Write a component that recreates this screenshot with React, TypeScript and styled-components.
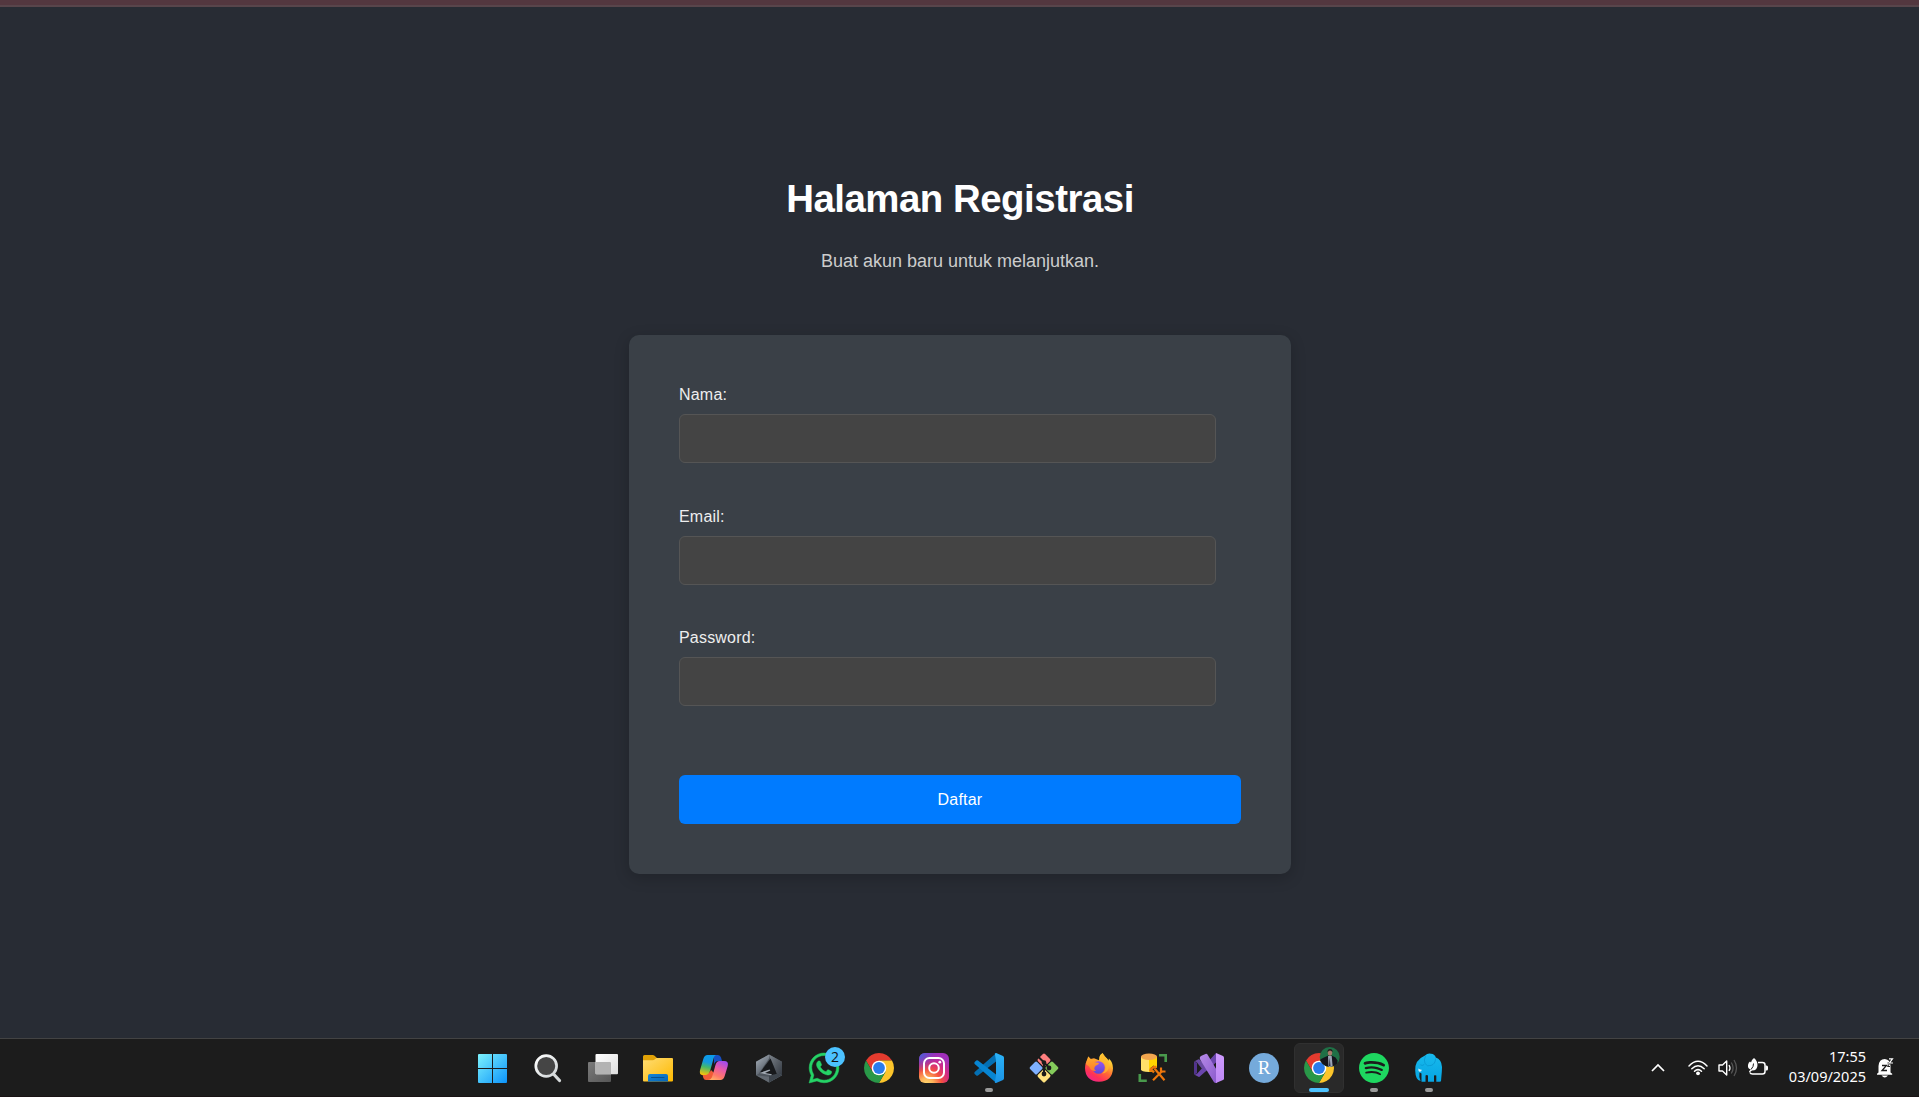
import React from 'react';
import styled, { createGlobalStyle } from 'styled-components';
import { SiWhatsapp, SiSpotify } from 'react-icons/si';

const GlobalStyle = createGlobalStyle`
  * { box-sizing: border-box; }
  body { margin: 0; background: #282c34; overflow: hidden; font-family: 'Liberation Sans', Arial, sans-serif; }
`;

const Screen = styled.div`
  display: flex;
  flex-direction: column;
  width: 1919px;
  height: 1097px;
`;

const BrowserEdge = styled.div`
  height: 7px;
  background: #53373f;
  border-bottom: 2px solid #58454b;
`;

const Page = styled.main`
  flex: 1;
  display: flex;
  flex-direction: column;
  align-items: center;
  padding: 170px 0 0 1px;
  background: #282c34;
`;

const Title = styled.h1`
  margin: 0 0 30px;
  font-size: 38.4px;
  line-height: 44px;
  letter-spacing: -0.48px;
  color: #fff;
`;

const Subtitle = styled.p`
  margin: 0 0 64px;
  font-size: 18px;
  line-height: 20px;
  color: #ccc;
`;

const Card = styled.form`
  display: flex;
  flex-direction: column;
  width: 662px;
  height: 539px;
  padding: 50px;
  border-radius: 10px;
  background: #3a4047;
  box-shadow: 0 4px 15px rgba(0, 0, 0, 0.2);
`;

const Field = styled.div`
  display: flex;
  flex-direction: column;
  height: 121.5px;
`;

const Label = styled.label`
  margin-bottom: 10px;
  font-size: 16px;
  line-height: 19px;
  letter-spacing: 0.2px;
  color: #eee;
`;

const Input = styled.input`
  width: 537px;
  height: 49px;
  padding: 12px;
  border: 1px solid #555;
  border-radius: 6px;
  background: #444;
  color: #fff;
  font-size: 16px;
  outline: none;
`;

const SubmitButton = styled.button`
  height: 49px;
  margin-top: 25.5px;
  border: none;
  border-radius: 6px;
  background: #007bff;
  color: #fff;
  font: 16px 'Liberation Sans', Arial, sans-serif;
  letter-spacing: 0.2px;
`;

const Taskbar = styled.footer`
  display: flex;
  align-items: center;
  justify-content: space-between;
  height: 59px;
  padding: 0 25px 0 479px;
  border-top: 1px solid #434343;
  border-bottom: 1px solid #191214;
  background: #1c1c1c;
`;

const Apps = styled.nav`
  display: flex;
  gap: 25px;
`;

const TaskButton = styled.div<{ $state?: 'active' | 'running' }>`
  position: relative;
  width: 30px;
  height: 30px;

  &::before {
    content: '';
    display: ${(p) => (p.$state === 'active' ? 'block' : 'none')};
    position: absolute;
    inset: -10px;
    border: 1px solid #303030;
    border-radius: 6px;
    background: #292929;
  }

  &::after {
    content: '';
    display: ${(p) => (p.$state ? 'block' : 'none')};
    position: absolute;
    top: 35px;
    left: ${(p) => (p.$state === 'active' ? '5px' : '11px')};
    width: ${(p) => (p.$state === 'active' ? '20px' : '8px')};
    height: 4px;
    border-radius: 2px;
    background: ${(p) => (p.$state === 'active' ? '#4cc2ff' : '#9a9a9a')};
  }

  > svg {
    position: relative;
    display: block;
    overflow: visible;
  }
`;

const Badge = styled.span`
  position: absolute;
  top: -6px;
  left: 16px;
  width: 20px;
  height: 20px;
  border-radius: 50%;
  background: #4cc2ff;
  color: #111;
  font: 14px/20px 'Open Sans', sans-serif;
  text-align: center;
`;

const Tray = styled.div`
  display: flex;
  align-items: center;
`;

const TrayIcon = styled.svg<{ $gap: number }>`
  display: block;
  margin-right: ${(p) => p.$gap}px;
  overflow: visible;
`;

const Clock = styled.div`
  width: 90px;
  margin: 0 10px 3px 0;
  color: #fff;
  font: 14.5px/20px 'Noto Sans', sans-serif;
  text-align: right;
  white-space: nowrap;
`;

const Glyph = ({ children }: { children: React.ReactNode }) => (
  <svg width="30" height="30" viewBox="0 0 30 30">{children}</svg>
);

type Stop = [string, string];
const Grad = ({ id, dir = [0, 0, 1, 1], stops }: { id: string; dir?: number[]; stops: Stop[] }) => (
  <linearGradient id={id} x1={dir[0]} y1={dir[1]} x2={dir[2]} y2={dir[3]}>
    {stops.map(([o, c]) => <stop key={o} offset={o} stopColor={c} />)}
  </linearGradient>
);

const Windows = () => (
  <Glyph>
    <defs>
      <linearGradient id="win" gradientUnits="userSpaceOnUse" x1="-1" y1="1" x2="28" y2="30">
        <stop offset="0" stopColor="#7df3fd" /><stop offset="1" stopColor="#0c93fa" />
      </linearGradient>
    </defs>
    <path fill="url(#win)" d="M0 1h13v14H-1V2q0-1 1-1zM14 1h13q1 0 1 1v13H14zM-1 16h14v14H0q-1 0-1-1zM14 16h14v13q0 1-1 1H14z" />
  </Glyph>
);

const Search = () => (
  <Glyph>
    <defs><Grad id="sea" stops={[['0', '#fff'], ['1', '#cfd4d6']]} /></defs>
    <path d="M19.500 21l6 6.500" stroke="#d6dadb" strokeWidth="3.200" strokeLinecap="round" />
    <circle cx="12.200" cy="13" r="10.400" fill="#454545" stroke="url(#sea)" strokeWidth="2.700" />
  </Glyph>
);

const TaskView = () => (
  <Glyph>
    <defs>
      <Grad id="tva" stops={[['0', '#fff'], ['1', '#dedede']]} />
      <Grad id="tvb" stops={[['0', '#7b7b7b'], ['1', '#565656']]} />
    </defs>
    <rect x="-1" y="9" width="23" height="20" rx="1" fill="url(#tvb)" />
    <rect x="6.500" y="1" width="22.500" height="20.300" rx="1" fill="url(#tva)" />
    <path d="M6.500 9H21q1 0 1 1v11.300H7.500q-1 0-1-1z" fill="#b3b3b3" />
  </Glyph>
);

const Explorer = () => (
  <Glyph>
    <defs>
      <Grad id="exa" stops={[['0', '#ffdc74'], ['1', '#fdb900']]} />
      <Grad id="exb" stops={[['0', '#1585d8'], ['1', '#0565b6']]} />
    </defs>
    <path d="M-1 9V3.500Q-1 2 .5 2h8.300q1 0 1.800.8L13 5v4z" fill="#e0a106" />
    <path d="M-1 7.200h9.500q1.500 0 2.700-1.300L12.500 5H28q1 0 1 1v21.500q0 1-1 1H0q-1 0-1-1z" fill="url(#exa)" />
    <path d="M4 28.500V23q0-2 2-2h16q2 0 2 2v5.500z" fill="url(#exb)" />
    <path d="M7.500 24.500h12.500" stroke="#08508d" strokeWidth="1.200" strokeLinecap="round" />
  </Glyph>
);

const Copilot = () => (
  <Glyph>
    <defs>
      <Grad id="coa" dir={[0.5, 0, 0.3, 1]} stops={[['0', '#0b9bea'], ['.35', '#1598e0'], ['.6', '#43b86b'], ['1', '#f6c10c']]} />
      <Grad id="cob" dir={[0.8, 0, 0.3, 1]} stops={[['0', '#a04bf0'], ['.4', '#e85aa8'], ['.75', '#ff7868'], ['1', '#ffad67']]} />
    </defs>
    <path d="M15 2h4q2.200 0 3 2.500L23 8h-4q-3 0-4 3.500z" fill="#174fc4" />
    <path d="M7 27q-2 0-2.600-2L3 20h6q2 0 3-3l4 4-2 6z" fill="#f15b37" />
    <path d="M8.500 2H17q-1.700.6-2.300 3l-3.400 12.300Q10 22 6 22H3.500Q0 22 1 17.300L4.300 6Q5.500 2 8.500 2z" fill="url(#coa)" />
    <path d="M20.500 8H25q5 0 3.700 5l-3 10Q24.600 27 21.300 27H8.500q3.800 0 4.900-4l3.100-11Q17.700 8 20.500 8z" fill="url(#cob)" />
  </Glyph>
);

const Cube = () => (
  <Glyph>
    <defs>
      <Grad id="cua" dir={[0, 0, 0.6, 1]} stops={[['0', '#aeb7c1'], ['1', '#4d555f']]} />
      <Grad id="cub" stops={[['0', '#7c838a'], ['1', '#343a43']]} />
    </defs>
    <path d="M15 1.500l13 7.200v13.600L15 29.500 2 22.300V8.700z" fill="#4e555d" />
    <path d="M15 1.500v4L4.500 21 2 22.300V8.700z" fill="url(#cua)" />
    <path d="M15 1.500l13 7.200v13.600l-5-2L15.800 5z" fill="url(#cub)" />
    <path d="M2 22.300L15 29.500l13-7.200-5-2-8 3.500z" fill="#636a72" />
    <path d="M15 29.500V23l8-3 5 2.300z" fill="#3d444c" />
    <path d="M16.500 5.500l6.300 15.200L18 22 6 19.500z" fill="#17191c" />
    <path d="M5.500 20l10-3.600.8 1.200-5.300 2.400 7 1.200-1 1z" fill="#a2aab3" />
  </Glyph>
);

const Chrome = ({ avatar = false }: { avatar?: boolean }) => (
  <Glyph>
    <path d="M2.010 7.500A15 15 0 0 1 27.990 7.500H15V15l-6.500 3.750z" fill="#e33b2e" />
    <path d="M27.990 7.500A15 15 0 0 1 15 30l6.500-11.250L15 15V7.500z" fill="#fcc52b" />
    <path d="M15 30A15 15 0 0 1 2.010 7.500L8.500 18.750 15 15l6.500 3.750z" fill="#299848" />
    <circle cx="15" cy="15" r="7.300" fill="#fff" />
    <circle cx="15" cy="15" r="5.900" fill="#2a7cec" />
    {avatar && (
      <g>
        <clipPath id="ava"><circle cx="25.700" cy="4" r="10" /></clipPath>
        <g clipPath="url(#ava)">
          <path d="M15-7h22v22H15z" fill="#1f7046" />
          <path d="M15 8l2-2 3-1.500 4.500-2h3l4 2 2 3V15H15z" fill="#15141c" />
          <path d="M15.500 8q3 1.500 4 6l-4 1z" fill="#48343b" />
          <path d="M24 3h3.700l1 11h-4.200z" fill="#9aa4b4" />
          <path d="M25.700 4.500l.8 8.500h-1.500z" fill="#262b42" />
          <ellipse cx="26" cy="-.2" rx="2.200" ry="3" fill="#a77b69" />
          <path d="M23.500-.5q-.3-3.600 2.500-3.600t2.500 3.300q-1.300-1.700-2.500-1.600t-2.500 1.900z" fill="#221d1d" />
        </g>
      </g>
    )}
  </Glyph>
);

const Instagram = () => (
  <Glyph>
    <defs>
      <radialGradient id="ina" cx=".25" cy="1.050" r="1.050">
        <stop offset="0" stopColor="#ffdc70" /><stop offset=".22" stopColor="#fdb35a" />
        <stop offset=".48" stopColor="#f4513f" /><stop offset=".72" stopColor="#d42a82" /><stop offset="1" stopColor="#a02fbb" />
      </radialGradient>
      <radialGradient id="inb" cx="0" cy="0" r=".65">
        <stop offset="0" stopColor="#3a6ce0" /><stop offset="1" stopColor="#6b3bd0" stopOpacity="0" />
      </radialGradient>
    </defs>
    <rect width="30" height="30" rx="6" fill="url(#ina)" />
    <rect width="30" height="30" rx="6" fill="url(#inb)" />
    <g fill="none" stroke="#fff" strokeWidth="2">
      <rect x="5" y="5" width="20" height="20" rx="5.500" />
      <circle cx="15" cy="15" r="4.800" />
    </g>
    <circle cx="20.800" cy="9.200" r="1.400" fill="#fff" />
  </Glyph>
);

const VsCode = () => (
  <Glyph>
    <defs><Grad id="vsc" dir={[0, 0, 0, 1]} stops={[['0', '#2bb3f8'], ['1', '#1b94e6']]} /></defs>
    <path d="M22 .2L.7 19q-.9.900 0 1.900l1.600 1.500q.8.700 1.700 0L22 8.500z" fill="#0470b4" />
    <path d="M22 29.800L.7 11q-.9-.900 0-1.900l1.600-1.500q.8-.700 1.700 0L22 21.500z" fill="#0785d2" />
    <path d="M22 7.500L20.800.6q1.200-.9 2.500-.2L29 3.100q1 .500 1 1.600v20.600q0 1.100-1 1.600l-5.700 2.700q-1.300.700-2.500-.200L22 22.500z" fill="url(#vsc)" />
  </Glyph>
);

const Git = () => (
  <Glyph>
    <g transform="rotate(45 15 15)">
      <rect x="4.400" y="4.400" width="10" height="10" rx="1.500" fill="#ff7f7f" />
      <rect x="15.600" y="4.400" width="10" height="10" rx="1.500" fill="#84cb5b" />
      <rect x="4.400" y="15.600" width="10" height="10" rx="1.500" fill="#7fb0ff" />
      <rect x="15.600" y="15.600" width="10" height="10" rx="1.500" fill="#ffe27f" />
    </g>
    <path d="M9.500 4L15 9.500V21M15 9.500l5.500 5.500" fill="none" stroke="#1b1b1b" strokeWidth="2" />
    <circle cx="15" cy="9.500" r="2.300" fill="#1b1b1b" />
    <circle cx="15" cy="21" r="2.400" fill="#1b1b1b" />
    <circle cx="20" cy="15" r="2.400" fill="#1b1b1b" />
  </Glyph>
);

const Firefox = () => (
  <Glyph>
    <defs>
      <Grad id="ffa" dir={[0.85, 0, 0.25, 1]} stops={[['0', '#fff04a'], ['.3', '#ffbd2f'], ['.55', '#ff6a35'], ['.8', '#ff3157'], ['1', '#ef248d']]} />
      <Grad id="ffb" dir={[0.5, 0, 0.5, 1]} stops={[['0', '#9a55ee'], ['1', '#5a48d6']]} />
      <Grad id="ffc" dir={[0, 0, 0, 1]} stops={[['0', '#ffb02c'], ['1', '#ff7a2a']]} />
    </defs>
    <path d="M18.500 0q1.300 3 4.300 5.200 1.200 1 1.800 2.500l.3-2.200Q29 9.500 29 15.200 28.500 28.500 15 28.700 1.300 28.200 1 15 1 9.500 4 6l.2-2.500L6.500 6l3.500-.7 5 2 .300-3.300q.7-2.500 3.200-4z" fill="url(#ffa)" />
    <circle cx="14.500" cy="14.500" r="6.300" fill="url(#ffb)" />
    <path d="M1.800 11Q2.500 7.500 4.200 3.500L7 6.300q3-1 5.300.700-1.600.8-1.800 2.200l3.500.5q1.800.5 0 1.900-3 1-3.300 2.500Q9.500 16.500 12 18q-5 .5-6.700-4.300z" fill="url(#ffc)" />
    <path d="M14.500 7.500Q22 8 21.500 15q-.5 4-3.500 5.600 6.500-.600 7-7.600-.500-6-6.500-13-3 4-1 7.500z" fill="#ffb82e" opacity=".75" />
  </Glyph>
);

const SqlTools = () => (
  <Glyph>
    <path d="M20 2.300h6.700V9M.8 21v6.700h7" fill="none" stroke="#49994c" strokeWidth="2.600" />
    <path d="M2 3.500v12.800q0 2.700 8 2.700V3.500z" fill="#ffe169" />
    <path d="M10 3.500h8v12.800q0 2.700-8 2.700z" fill="#ffd500" />
    <ellipse cx="10" cy="3.700" rx="8" ry="3.200" fill="#f2a64e" />
    <g stroke="#1c1c1c" strokeWidth="4" fill="none"><path d="M12 17l4-3M15.500 15.500l9.500 11M25.500 15.500L14.500 27" /></g>
    <g stroke="#ed760c" strokeWidth="2.200" fill="none">
      <path d="M11 18.500q2-5 6.500-4.500M15.500 15.500L25.500 27.200M14 27.200l9-9" />
      <path d="M22 14.500v4h4.500M11 15.500l4 4" />
    </g>
  </Glyph>
);

const VisualStudio = () => (
  <Glyph>
    <defs>
      <Grad id="vsa" dir={[0, 0, 0, 1]} stops={[['0', '#cf9bff'], ['1', '#bd88f4']]} />
      <Grad id="vsb" stops={[['0', '#b68ae8'], ['1', '#8959cc']]} />
    </defs>
    <path d="M0 8.500L3 9.800v10.400l-3 1.300z" fill="#52348d" />
    <path d="M22 0v9.500L5.500 23.700Q5 24 4.500 23.800L0 21.500q2 .200 3-.8z" fill="#6b46ad" />
    <path d="M0 8.500L4.500 6.300Q5 6 5.500 6.500L12 13l-3.500 3.500L3 9.400Q2 8.200 0 8.500z" fill="#694aa1" />
    <path d="M7.500 2.800l4-1.800q1.200-.600 2 .500L23 17.500V30h-1q-1.500 0-2.300-1.300L6.400 7q-1.700-3 1.100-4.200z" fill="url(#vsb)" />
    <path d="M22 0l7 3q1 .500 1 1.500v21q0 1-1 1.500l-7 3V0z" fill="url(#vsa)" />
  </Glyph>
);

const RStudio = () => (
  <Glyph>
    <circle cx="15" cy="15" r="15" fill="#75aadb" />
    <text x="15.200" y="20.800" textAnchor="middle" fontFamily="'Liberation Serif', serif" fontSize="19" fill="#fff">R</text>
  </Glyph>
);

const Elephant = () => (
  <Glyph>
    <defs><Grad id="ele" dir={[0, 0, 0, 1]} stops={[['0', '#18b9ec'], ['1', '#06a5e4']]} /></defs>
    <path d="M11 2.500Q13.500 0 17 .7q4 .3 4.800 3.900Q27.500 6.300 28 14l-.2 5-.8 9q-.2.800-1.200.8h-3.500V22.500q-1.300-.7-2.300 0v6.300h-6V22.500q-1.500-.8-2.500 0v6.300H7.500V20.500L5.500 19.500Q4.700 24 6.600 28 1.500 27.500 1.200 17.500.7 7 11 2.500z" fill="url(#ele)" />
    <path d="M6.300 11.800q2.200 1.500 4-.4M11.500 3q-2 4-.5 7.500 2 3.500 6 2 4.500-1.500 4.500-7" fill="none" stroke="#0793cf" strokeWidth=".7" />
    <path d="M4.300 15.500q2 1.300 3.500 1.200-.3 2.200-2.200 2-1.500-.7-1.300-3.200z" fill="#dff2f9" />
  </Glyph>
);

const fields = [
  { label: 'Nama:', type: 'text' },
  { label: 'Email:', type: 'email' },
  { label: 'Password:', type: 'password' },
];

export default function App() {
  return (
    <Screen>
      <GlobalStyle />
      <BrowserEdge />
      <Page>
        <Title>Halaman Registrasi</Title>
        <Subtitle>Buat akun baru untuk melanjutkan.</Subtitle>
        <Card>
          {fields.map((f) => (
            <Field key={f.label}>
              <Label htmlFor={f.type}>{f.label}</Label>
              <Input id={f.type} type={f.type} />
            </Field>
          ))}
          <SubmitButton type="button">Daftar</SubmitButton>
        </Card>
      </Page>
      <Taskbar>
        <Apps>
          <TaskButton><Windows /></TaskButton>
          <TaskButton><Search /></TaskButton>
          <TaskButton><TaskView /></TaskButton>
          <TaskButton><Explorer /></TaskButton>
          <TaskButton><Copilot /></TaskButton>
          <TaskButton><Cube /></TaskButton>
          <TaskButton><SiWhatsapp size={30} color="#25d366" stroke="#25d366" strokeWidth={0.4} /><Badge>2</Badge></TaskButton>
          <TaskButton><Chrome /></TaskButton>
          <TaskButton><Instagram /></TaskButton>
          <TaskButton $state="running"><VsCode /></TaskButton>
          <TaskButton><Git /></TaskButton>
          <TaskButton><Firefox /></TaskButton>
          <TaskButton><SqlTools /></TaskButton>
          <TaskButton><VisualStudio /></TaskButton>
          <TaskButton><RStudio /></TaskButton>
          <TaskButton $state="active"><Chrome avatar /></TaskButton>
          <TaskButton $state="running"><SiSpotify size={30} color="#1ed760" /></TaskButton>
          <TaskButton $state="running"><Elephant /></TaskButton>
        </Apps>
        <Tray>
          <TrayIcon $gap={23} width="14" height="8" viewBox="0 0 14 8">
            <path d="M1 7l6-6 6 6" fill="none" stroke="#fff" strokeWidth="1.700" />
          </TrayIcon>
          <TrayIcon $gap={10} width="20" height="16" viewBox="0 0 20 16">
            <g fill="none" stroke="#fff" strokeWidth="1.500" strokeLinecap="round">
              <path d="M1 6Q10-3.300 19 6M3.800 8.800q6.200-6.200 12.400 0M6.500 11.300q3.500-3.400 7 0" />
            </g>
            <circle cx="10" cy="13.300" r="1.900" fill="#fff" />
          </TrayIcon>
          <TrayIcon $gap={10} width="20" height="18" viewBox="0 0 20 18">
            <path d="M1 6h3.500l4.200-4v14l-4.200-4H1z" fill="none" stroke="#fff" strokeWidth="1.400" strokeLinejoin="round" />
            <path d="M11 6q2 3 0 6" fill="none" stroke="#fff" strokeWidth="1.300" />
            <path d="M13.300 3.500q3.600 5.500 0 11M16 1q5 8 0 16" fill="none" stroke="#555" strokeWidth="1.300" />
          </TrayIcon>
          <TrayIcon $gap={8} width="20" height="18" viewBox="0 0 20 18">
            <path d="M10 3.500h4.500q2.500 0 2.500 2.500v6.500q0 2.500-2.500 2.500H4.500q-2 0-2.500-1.500" fill="none" stroke="#fff" strokeWidth="1.500" />
            <path d="M17.500 6.500h1q1.500 0 1.500 1.500v2q0 1.500-1.500 1.500h-1z" fill="#fff" />
            <path d="M6-1q3.500 3 3.500 7Q9.500 11.500 4 11.500l-2.500 2-.5-1 1.500-2q-3-1-2.500-4.500Q.5 3 2 2.500l1 1Q3.500.5 6-1z" fill="#fff" />
            <path d="M5.500 4.500q.3 3-2.500 6" fill="none" stroke="#1c1c1c" strokeWidth="1" />
          </TrayIcon>
          <Clock><div>17:55</div><div>03/09/2025</div></Clock>
          <TrayIcon $gap={0} width="18" height="20" viewBox="0 0 18 20">
            <path d="M2.500 14.500V8Q3 1 8.800 1q5.700.500 5.700 7v6.500l1.700 1.300v1H1v-1z" fill="#fff" />
            <path d="M5.500 17.500q3.300 4 6.500 0z" fill="#fff" />
            <path d="M12.500 1h5v5h-3z" fill="#1c1c1c" />
            <path d="M6 7.500h4.500L6 12.500h5" fill="none" stroke="#1c1c1c" strokeWidth="1.300" />
            <path d="M11.500 5h2.500l-2.500 3.500h2.500" fill="none" stroke="#1c1c1c" strokeWidth="1" />
            <path d="M13 .800h3.500L13.500 5H17" fill="none" stroke="#fff" strokeWidth="1.200" />
          </TrayIcon>
        </Tray>
      </Taskbar>
    </Screen>
  );
}
